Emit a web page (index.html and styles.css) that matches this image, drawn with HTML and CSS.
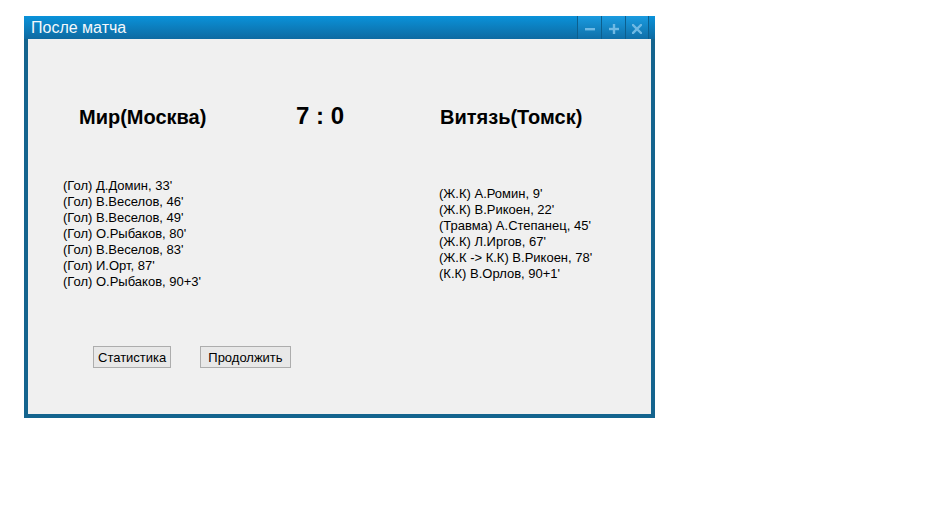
FILE: index.html
```html
<!DOCTYPE html>
<html lang="ru">
<head>
<meta charset="utf-8">
<title>После матча</title>
<link rel="stylesheet" href="styles.css">
</head>
<body>
<div class="window">
  <div class="titlebar">
    <span class="title">После матча</span>
    <div class="controls">
      <button class="ctl" aria-label="Свернуть"><svg width="10" height="10" viewBox="0 0 10 10"><rect x="0" y="4" width="10" height="2.4" fill="#6fb9e4"/></svg></button>
      <button class="ctl" aria-label="Развернуть"><svg width="10" height="10" viewBox="0 0 10 10"><rect x="0" y="3.8" width="10" height="2.4" fill="#6fb9e4"/><rect x="3.8" y="0" width="2.4" height="10" fill="#6fb9e4"/></svg></button>
      <button class="ctl" aria-label="Закрыть"><svg width="10" height="10" viewBox="0 0 10 10"><path d="M1 1 L9 9 M9 1 L1 9" stroke="#6fb9e4" stroke-width="2.4" stroke-linecap="square"/></svg></button>
    </div>
  </div>
  <div class="content">
    <div class="header">
      <div class="team team-home">Мир(Москва)</div>
      <div class="score">7 : 0</div>
      <div class="team team-away">Витязь(Томск)</div>
    </div>
    <div class="events">
      <ul class="list list-home">
        <li>(Гол) Д.Домин, 33'</li>
        <li>(Гол) В.Веселов, 46'</li>
        <li>(Гол) В.Веселов, 49'</li>
        <li>(Гол) О.Рыбаков, 80'</li>
        <li>(Гол) В.Веселов, 83'</li>
        <li>(Гол) И.Орт, 87'</li>
        <li>(Гол) О.Рыбаков, 90+3'</li>
      </ul>
      <ul class="list list-away">
        <li>(Ж.К) А.Ромин, 9'</li>
        <li>(Ж.К) В.Рикоен, 22'</li>
        <li>(Травма) А.Степанец, 45'</li>
        <li>(Ж.К) Л.Иргов, 67'</li>
        <li>(Ж.К -&gt; К.К) В.Рикоен, 78'</li>
        <li>(К.К) В.Орлов, 90+1'</li>
      </ul>
    </div>
    <div class="actions">
      <button class="btn">Статистика</button>
      <button class="btn btn-wide">Продолжить</button>
    </div>
  </div>
</div>
</body>
</html>
```
FILE: styles.css
```css
html, body {
  margin: 0;
  padding: 0;
  background: #ffffff;
  font-family: "Liberation Sans", Arial, sans-serif;
}

.window {
  margin: 16px 0 0 24px;
  width: 631px;
  box-sizing: border-box;
  padding: 0 0 4px 0;
  background: #14648e;
}

.titlebar {
  height: 23px;
  display: flex;
  align-items: stretch;
  justify-content: space-between;
  background: linear-gradient(#0a92da, #0e6aa1);
}

.title {
  color: #f4f8fb;
  font-size: 16px;
  line-height: 23px;
  padding-left: 7px;
}

.controls {
  display: flex;
  margin-right: 6px;
}

.ctl {
  width: 24px;
  height: 23px;
  padding: 0;
  margin: 0;
  border: none;
  border-left: 1px solid #0c5f8e;
  background: linear-gradient(#1a9be0, #0f6fa8);
  display: flex;
  align-items: center;
  justify-content: center;
  padding-top: 2px;
}

.ctl:last-child {
  border-right: 1px solid #0c5f8e;
}

.content {
  margin: 0 4px;
  height: 375px;
  background: #f0f0f0;
  color: #000;
  display: flex;
  flex-direction: column;
}

.header {
  display: grid;
  grid-template-columns: 217px 144px auto;
  align-items: center;
  padding: 62px 0 0 51px;
  height: 30px;
}

.team {
  font-weight: bold;
  font-size: 20px;
  padding-top: 3px;
}

.score {
  font-weight: bold;
  font-size: 24px;
}

.events {
  display: flex;
  padding: 47px 0 0 35px;
}

.list {
  list-style: none;
  margin: 0;
  padding: 0;
  font-size: 13px;
  line-height: 16px;
}

.list-home {
  width: 376px;
}

.list-away {
  padding-top: 8px;
}

.actions {
  display: flex;
  gap: 29px;
  padding: 56px 0 0 65px;
}

.btn {
  font-family: "Liberation Sans", Arial, sans-serif;
  font-size: 13px;
  height: 22px;
  padding: 0 4px;
  margin: 0;
  border: 1px solid #adadad;
  background: #e8e8e8;
  color: #000;
  border-radius: 0;
}

.btn-wide {
  padding: 0 7px;
}
```
